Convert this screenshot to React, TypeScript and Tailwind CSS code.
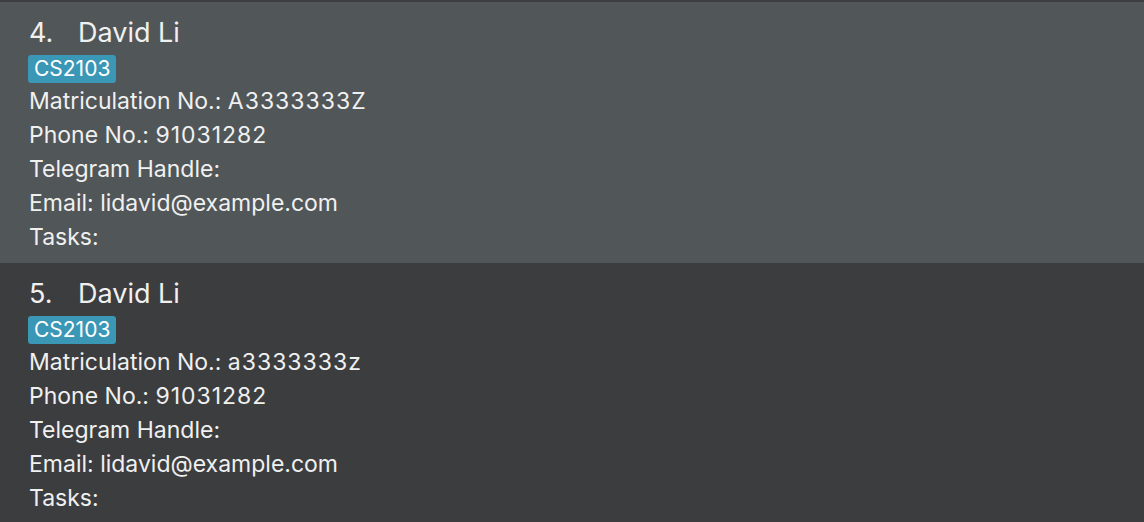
import React from "react";

type Person = { idx: number; name: string; tag: string; matric: string; phone: string; email: string };

const people: Person[] = [
  { idx: 4, name: "David Li", tag: "CS2103", matric: "A3333333Z", phone: "91031282", email: "lidavid@example.com" },
  { idx: 5, name: "David Li", tag: "CS2103", matric: "a3333333z", phone: "91031282", email: "lidavid@example.com" },
];

function Card({ p, odd }: { p: Person; odd: boolean }) {
  return (
    <div className={`${odd ? "bg-[#515658]" : "bg-[#3c3d3f]"} pl-[29px] pt-[14px] pb-[9px] text-[#f0f0f0]`}>
      <div className="h-[34px] leading-[34px] text-[27px] flex">
        <span className="w-[49px]">{p.idx}.</span>
        <span>{p.name}</span>
      </div>
      <div className="mt-[5px] h-[28px] flex">
        <span className="-ml-px bg-[#3a97b6] rounded-[3px] px-[6px] text-[21px] leading-[28px] text-white">{p.tag}</span>
      </div>
      <div className="mt-px text-[23px] leading-[34px]">
        <div>
          Matriculation No.: <span className="tracking-[1px]">{p.matric}</span>
        </div>
        <div>
          Phone No.: <span className="tracking-[1px]">{p.phone}</span>
        </div>
        <div>Telegram Handle:</div>
        <div>Email: {p.email}</div>
        <div>Tasks:</div>
      </div>
    </div>
  );
}

export default function App() {
  return (
    <div className="w-[1144px] h-[522px] overflow-hidden bg-[#3c3d3f] pt-[2px]" style={{ fontFamily: 'Inter, "Noto Sans", sans-serif' }}>
      {people.map((p, i) => (
        <Card key={i} p={p} odd={i === 0} />
      ))}
    </div>
  );
}
